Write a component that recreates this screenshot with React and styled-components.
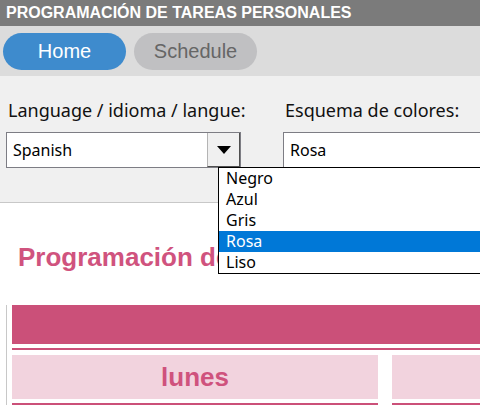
import React from 'react'
import styled, { createGlobalStyle } from 'styled-components'

const GlobalStyle = createGlobalStyle`
  html, body {
    margin: 0;
    padding: 0;
    overflow: hidden;
    background: #ffffff;
  }
`

const Page = styled.div`
  width: 480px;
  font-family: "Liberation Sans", Arial, sans-serif;
`

const TitleBar = styled.div`
  height: 26px;
  line-height: 26px;
  padding-left: 6px;
  background: #7b7b7b;
  color: #ffffff;
  font-size: 16px;
  font-weight: 700;
  white-space: nowrap;
`

const Nav = styled.div`
  display: flex;
  gap: 8px;
  padding: 7px 3px 6px;
  background: #dcdcdc;
`

const NavButton = styled.button`
  width: 123px;
  height: 37px;
  border: none;
  border-radius: 19px;
  font-family: "Liberation Sans", Arial, sans-serif;
  font-size: 20px;
  background: ${(props) => (props.active ? '#3e8bcd' : '#c0c0c2')};
  color: ${(props) => (props.active ? '#ffffff' : '#666666')};
`

const Settings = styled.div`
  position: relative;
  display: flex;
  gap: 42px;
  height: 127px;
  box-sizing: border-box;
  padding: 23px 0 0 6px;
  background: #f0f0f0;
  border-bottom: 1px solid #c8c8c8;
  font-family: "Noto Sans", "Open Sans", sans-serif;
`

const Field = styled.div`
  display: flex;
  flex-direction: column;
  gap: 10px;
  flex: 0 0 235px;
  width: 235px;
  min-width: 0;
`

const Label = styled.div`
  padding-left: 2px;
  font-size: 18px;
  line-height: 23px;
  color: #111111;
  white-space: nowrap;
`

const SelectBox = styled.div`
  display: flex;
  align-items: stretch;
  height: 36px;
  box-sizing: border-box;
  border: 1px solid #7d7d84;
  background: #ffffff;
`

const SelectValue = styled.div`
  flex: 1;
  padding-left: 6px;
  font-size: 16px;
  line-height: 34px;
  color: #000000;
`

const ArrowButton = styled.div`
  display: flex;
  align-items: center;
  justify-content: center;
  width: 33px;
  box-sizing: border-box;
  background: #f0f0f0;
  border-left: 1px solid #b4b4b4;
  border-right: 1px solid #505050;
  border-bottom: 1px solid #505050;
`

const Triangle = styled.div`
  width: 0;
  height: 0;
  border-left: 7px solid transparent;
  border-right: 7px solid transparent;
  border-top: 8px solid #000000;
`

const DropList = styled.ul`
  position: absolute;
  left: 218px;
  top: 91px;
  width: 300px;
  margin: 0;
  padding: 0;
  list-style: none;
  border: 1px solid #000000;
  background: #ffffff;
  font-size: 16px;
`

const Option = styled.li`
  height: 21px;
  line-height: 21px;
  padding-left: 7px;
  background: ${(props) => (props.selected ? '#0078d7' : '#ffffff')};
  color: ${(props) => (props.selected ? '#ffffff' : '#000000')};
`

const Main = styled.div`
  padding-top: 40px;
`

const Heading = styled.h1`
  margin: 0 0 34px;
  padding-left: 18px;
  font-size: 26px;
  line-height: 28px;
  font-weight: 700;
  color: #d0537e;
  white-space: nowrap;
`

const Table = styled.div`
  margin-left: 6px;
  padding-left: 5px;
  border-left: 1px solid #c8c8c8;
`

const HeaderBar = styled.div`
  height: 39px;
  background: #cb5079;
`

const Rule = styled.div`
  height: 2px;
  margin: 4px 0 5px;
  background: #cb5079;
`

const DayRow = styled.div`
  display: grid;
  grid-template-columns: 366px 366px;
  gap: 14px;
`

const DayCell = styled.div`
  display: flex;
  flex-direction: column;
`

const DayName = styled.div`
  height: 44px;
  line-height: 44px;
  text-align: center;
  background: #f2d3de;
  color: #cf527d;
  font-size: 26px;
  font-weight: 700;
`

const DayRule = styled.div`
  height: 2px;
  margin-top: 4px;
  background: #cb5079;
`

const colors = ['Negro', 'Azul', 'Gris', 'Rosa', 'Liso']

export default function App() {
  return (
    <Page>
      <GlobalStyle />
      <TitleBar>PROGRAMACIÓN DE TAREAS PERSONALES</TitleBar>
      <Nav>
        <NavButton active>Home</NavButton>
        <NavButton>Schedule</NavButton>
      </Nav>
      <Settings>
        <Field>
          <Label>Language / idioma / langue:</Label>
          <SelectBox>
            <SelectValue>Spanish</SelectValue>
            <ArrowButton>
              <Triangle />
            </ArrowButton>
          </SelectBox>
        </Field>
        <Field>
          <Label>Esquema de colores:</Label>
          <SelectBox>
            <SelectValue>Rosa</SelectValue>
          </SelectBox>
        </Field>
        <DropList>
          {colors.map((c) => (
            <Option key={c} selected={c === 'Rosa'}>{c}</Option>
          ))}
        </DropList>
      </Settings>
      <Main>
        <Heading>Programación de tareas personales</Heading>
        <Table>
          <HeaderBar />
          <Rule />
          <DayRow>
            <DayCell>
              <DayName>lunes</DayName>
              <DayRule />
            </DayCell>
            <DayCell>
              <DayName>martes</DayName>
              <DayRule />
            </DayCell>
          </DayRow>
        </Table>
      </Main>
    </Page>
  )
}
